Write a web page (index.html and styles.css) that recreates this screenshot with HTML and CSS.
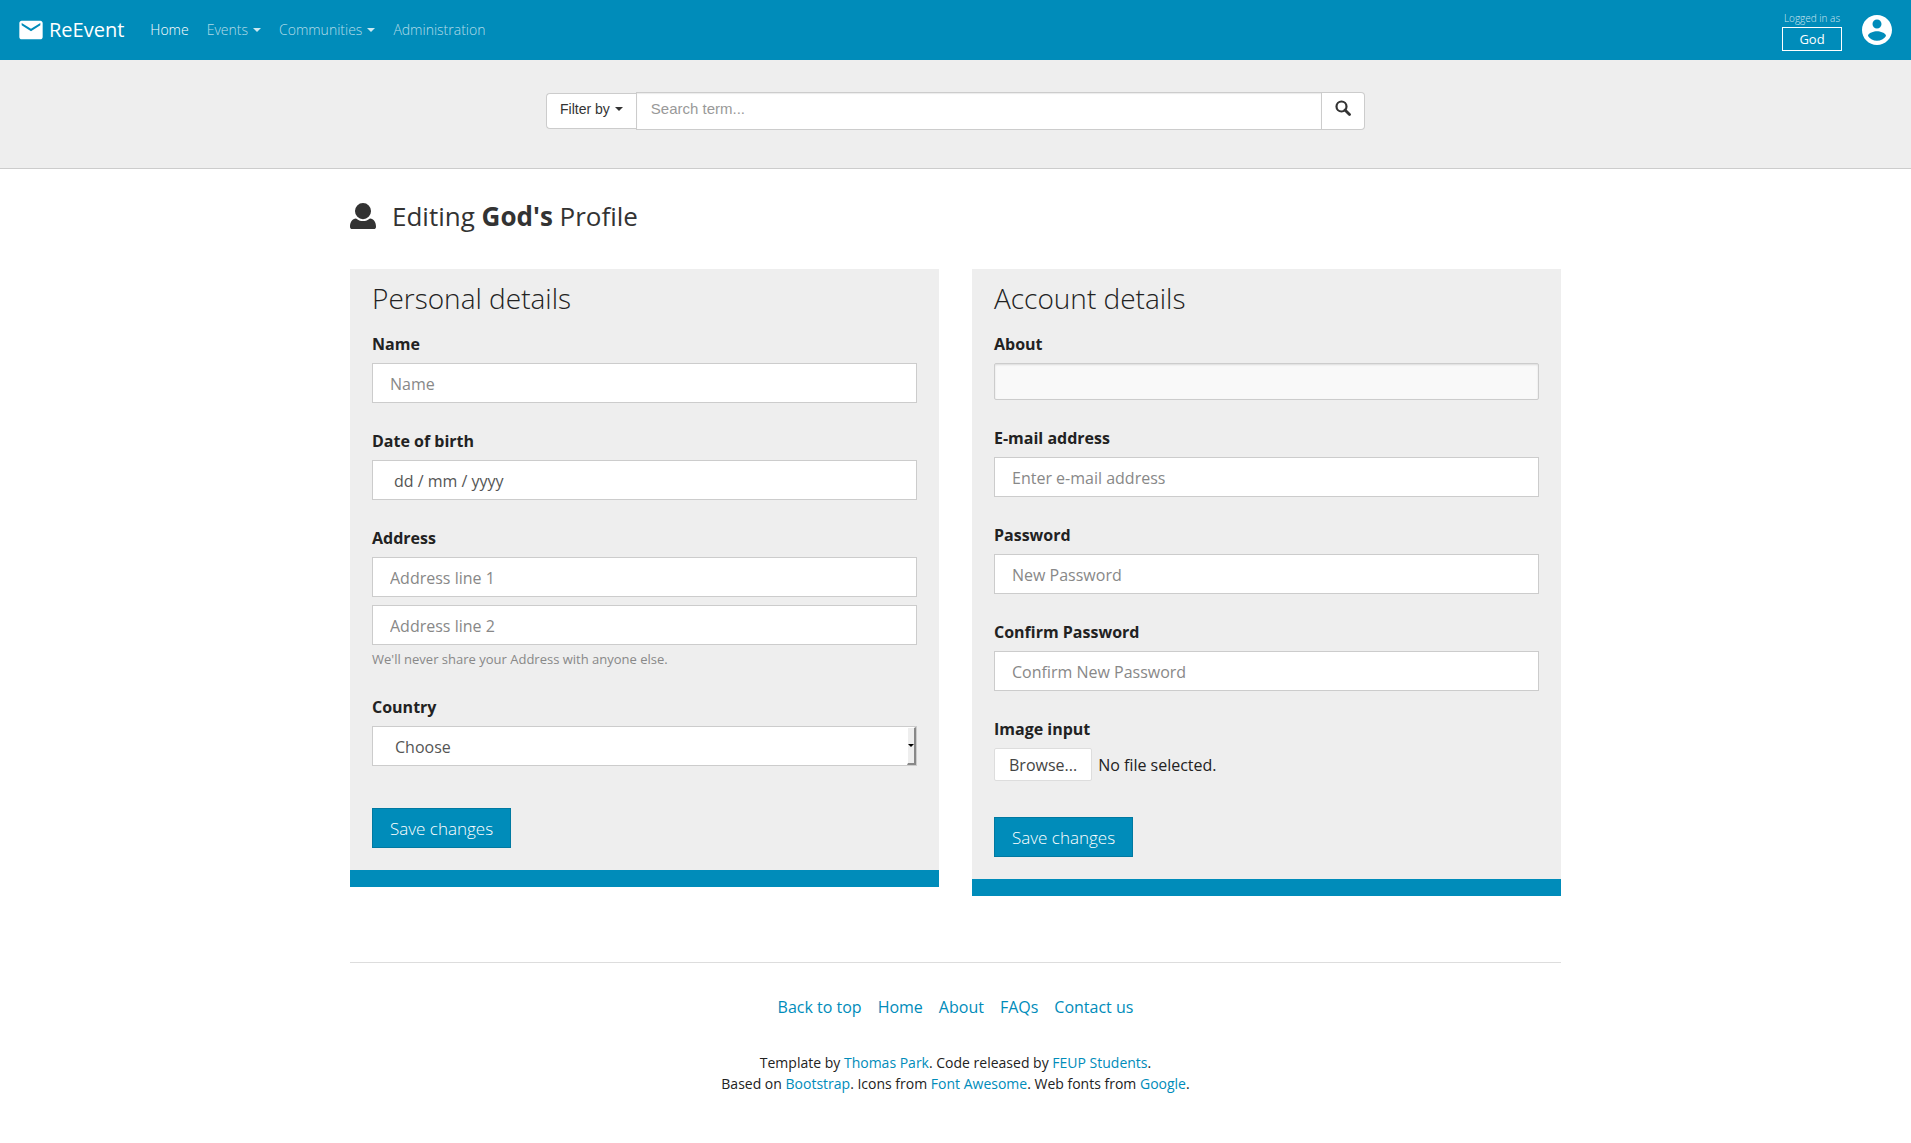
FILE: index.html
```html
<!DOCTYPE html>
<html lang="en">
<head>
<meta charset="utf-8">
<meta name="viewport" content="width=device-width, initial-scale=1">
<title>ReEvent - Edit profile</title>
<link rel="stylesheet" href="styles.css">
</head>
<body id="top">
<header class="navbar">
  <a class="brand" href="#">
    <svg class="brand-icon" viewBox="0 0 24 24" aria-hidden="true"><path fill="currentColor" d="M20 4H4c-1.100 0-1.990.900-1.990 2L2 18c0 1.100.900 2 2 2h16c1.100 0 2-.900 2-2V6c0-1.100-.900-2-2-2zm0 4l-8 5-8-5V6l8 5 8-5v2z"/></svg>
    <span>ReEvent</span>
  </a>
  <nav class="nav">
    <a class="nav-link active" href="#">Home</a>
    <a class="nav-link" href="#">Events<span class="caret"></span></a>
    <a class="nav-link" href="#">Communities<span class="caret"></span></a>
    <a class="nav-link" href="#">Administration</a>
  </nav>
  <div class="session">
    <div class="session-user">
      <span class="session-note">Logged in as</span>
      <button class="session-button" type="button">God</button>
    </div>
    <a class="avatar" href="#" aria-label="Profile">
      <svg viewBox="0 0 24 24" aria-hidden="true"><path fill="currentColor" d="M12 2C6.480 2 2 6.480 2 12s4.480 10 10 10 10-4.480 10-10S17.520 2 12 2zm0 3c1.660 0 3 1.340 3 3s-1.340 3-3 3-3-1.340-3-3 1.340-3 3-3zm0 14.200c-2.500 0-4.710-1.280-6-3.220.030-1.990 4-3.080 6-3.080 1.990 0 5.970 1.090 6 3.080-1.290 1.940-3.500 3.220-6 3.220z"/></svg>
    </a>
  </div>
</header>

<section class="search-band">
  <form class="search">
    <button class="filter-button" type="button">Filter by<span class="caret"></span></button>
    <input class="search-input" type="text" placeholder="Search term..." aria-label="Search term">
    <button class="search-button" type="button" aria-label="Search">
      <svg viewBox="0 0 16 16" aria-hidden="true"><circle cx="6.500" cy="6.500" r="5" fill="none" stroke="currentColor" stroke-width="2.200"/><path d="M10 10l4.500 4.500" stroke="currentColor" stroke-width="2.800" stroke-linecap="round"/></svg>
    </button>
  </form>
</section>

<main class="container">
  <h1 class="page-title">
    <svg class="title-icon" viewBox="0 0 26 26" aria-hidden="true"><path fill="currentColor" d="M13 0a8 8 0 0 1 8 8.200 8 8 0 0 1-16 0A8 8 0 0 1 13 0zM6 15.500c2 1.700 4.300 2.600 7 2.600s5-.900 7-2.600c3.800.400 6 3.700 6 8.200 0 1.500-.800 2.300-2.300 2.300H2.300C.800 26 0 25.200 0 23.700c0-4.500 2.200-7.800 6-8.200z"/></svg>
    <span>Editing <strong>God's</strong> Profile</span>
  </h1>

  <div class="cards">
    <form class="card">
      <h2 class="card-title">Personal details</h2>
      <div class="field">
        <label for="name">Name</label>
        <input class="control" id="name" type="text" placeholder="Name">
      </div>
      <div class="field">
        <label for="birth">Date of birth</label>
        <input class="control control-date" id="birth" type="text" placeholder="dd / mm / yyyy">
      </div>
      <div class="field field-address">
        <label for="address1">Address</label>
        <input class="control" id="address1" type="text" placeholder="Address line 1">
        <input class="control" type="text" placeholder="Address line 2" aria-label="Address line 2">
        <small class="help">We'll never share your Address with anyone else.</small>
      </div>
      <div class="field field-last">
        <label for="country">Country</label>
        <div class="select-wrap">
          <select class="control control-select" id="country"><option>Choose</option></select>
          <span class="select-arrow"></span>
        </div>
      </div>
      <button class="save" type="button">Save changes</button>
    </form>

    <form class="card">
      <h2 class="card-title">Account details</h2>
      <div class="field">
        <label for="about">About</label>
        <input class="control control-about" id="about" type="text">
      </div>
      <div class="field">
        <label for="email">E-mail address</label>
        <input class="control" id="email" type="email" placeholder="Enter e-mail address">
      </div>
      <div class="field">
        <label for="password">Password</label>
        <input class="control" id="password" type="password" placeholder="New Password">
      </div>
      <div class="field">
        <label for="confirm">Confirm Password</label>
        <input class="control" id="confirm" type="password" placeholder="Confirm New Password">
      </div>
      <div class="field field-file">
        <label for="image">Image input</label>
        <div class="file-row">
          <input class="file-input" id="image" type="file">
          <label class="browse" for="image">Browse...</label>
          <span>No file selected.</span>
        </div>
      </div>
      <button class="save" type="button">Save changes</button>
    </form>
  </div>

  <footer class="footer">
    <nav class="footer-links">
      <a href="#top">Back to top</a>
      <a href="#">Home</a>
      <a href="#">About</a>
      <a href="#">FAQs</a>
      <a href="#">Contact us</a>
    </nav>
    <p class="credits">Template by <a href="#">Thomas Park</a>. Code released by <a href="#">FEUP Students</a>.<br>
    Based on <a href="#">Bootstrap</a>. Icons from <a href="#">Font Awesome</a>. Web fonts from <a href="#">Google</a>.</p>
  </footer>
</main>
</body>
</html>
```
FILE: styles.css
```css
* { box-sizing: border-box; }

body {
  margin: 0;
  background: #fff;
  color: #222;
  font: 16px/24px "Open Sans", sans-serif;
}

a { color: #008cba; text-decoration: none; }
button, input, select { font-family: inherit; margin: 0; }

.navbar {
  display: flex;
  align-items: center;
  height: 60px;
  padding: 0 16px 0 17px;
  background: #008cba;
  color: #fff;
}

.brand {
  display: flex;
  align-items: center;
  gap: 4px;
  margin-right: 26px;
  color: #fff;
  font-size: 20px;
}
.brand-icon { width: 28px; height: 28px; }

.nav { display: flex; gap: 18px; }
.nav-link {
  display: flex;
  align-items: center;
  color: rgba(255, 255, 255, .7);
  font-size: 14px;
  font-weight: 300;
}
.nav-link.active { color: #fff; }

.caret {
  margin-left: 5px;
  border: 4px solid transparent;
  border-top-color: currentColor;
  border-bottom: 0;
}
.nav-link .caret { color: rgba(255, 255, 255, .8); }

.session {
  display: flex;
  align-items: center;
  gap: 17px;
  margin-left: auto;
}
.session-user {
  display: flex;
  flex-direction: column;
  align-items: center;
}
.session-note {
  color: rgba(255, 255, 255, .8);
  font-size: 10px;
  font-weight: 300;
  line-height: 18px;
}
.session-button {
  width: 60px;
  height: 24px;
  padding: 0;
  border: 1px solid #fff;
  background: none;
  color: #fff;
  font-size: 13px;
}
.avatar { color: #fff; }
.avatar svg { display: block; width: 36px; height: 36px; }

.search-band {
  padding: 32px 16px 38px;
  border-bottom: 1px solid #ccc;
  background: #eee;
}
.search {
  display: flex;
  align-items: center;
  max-width: 819px;
  margin: 0 auto;
  font-family: "Liberation Sans", Arial, sans-serif;
}
.filter-button {
  display: flex;
  align-items: center;
  height: 36px;
  padding: 0 13px 4px;
  border: 1px solid #ccc;
  border-right: 0;
  border-radius: 4px 0 0 4px;
  background: #fff;
  color: #333;
  font-size: 14px;
}
.search-input {
  flex: 1;
  min-width: 0;
  height: 38px;
  padding: 0 14px 6px;
  border: 1px solid #ccc;
  background: #fff;
  box-shadow: inset 0 1px 1px rgba(0, 0, 0, .08);
  font-size: 15px;
}
.search-input::placeholder { color: #999; }
.search-button {
  width: 43px;
  height: 38px;
  padding: 0 0 6px;
  border: 1px solid #ccc;
  border-left: 0;
  border-radius: 0 4px 4px 0;
  background: #fff;
  color: #333;
}
.search-button svg { display: block; width: 16px; height: 16px; margin: 0 auto; }

.container { max-width: 1211px; margin: 0 auto; }

.page-title {
  display: flex;
  align-items: center;
  gap: 16px;
  margin: 30px 0 36px;
  color: #333;
  font-size: 26px;
  font-weight: 400;
  line-height: 34px;
}
.title-icon { width: 26px; height: 26px; }

.cards {
  display: grid;
  grid-template-columns: 1fr 1fr;
  align-items: start;
  gap: 33px;
}
.card {
  padding: 9px 22px 22px;
  border-bottom: 17px solid #008cba;
  background: #eee;
}
.card-title {
  margin: 0 0 14px;
  font-size: 28px;
  font-weight: 300;
  line-height: 40px;
}

.field { display: flex; flex-direction: column; margin-bottom: 26px; }
.field > label { margin-bottom: 7px; font-weight: 700; }
.field-address { margin-bottom: 28px; }
.field-last { margin-bottom: 42px; }
.field-file { margin-bottom: 36px; }

.control {
  width: 100%;
  height: 40px;
  padding: 2px 17px 0;
  border: 1px solid #ccc;
  border-radius: 0;
  background: #fff;
  color: #555;
  font-size: 16px;
}
.control + .control { margin-top: 8px; }
.control::placeholder { color: #888; }
.control-date { padding-left: 21px; }
.control-date::placeholder { color: #555; }
.control-about {
  height: 37px;
  border-radius: 2px;
  background: #f9f9f9;
  box-shadow: inset 0 1px 2px rgba(0, 0, 0, .12);
}

.help { margin-top: 7px; color: #888; font-size: 13px; line-height: 15px; }

.select-wrap { position: relative; }
.control-select { display: block; padding-left: 22px; appearance: none; }
.select-arrow {
  position: absolute;
  top: 1px;
  right: 1px;
  bottom: 1px;
  width: 9px;
  border: 2px solid #888;
  border-top: 1px solid #fff;
  border-left: 1px solid #fff;
  background: #eee;
  pointer-events: none;
}
.select-arrow::after {
  position: absolute;
  top: 16px;
  left: 0;
  border: 3px solid transparent;
  border-top-color: #000;
  border-bottom: 0;
  content: "";
}

.file-row { display: flex; align-items: center; gap: 6px; position: relative; }
.file-input { position: absolute; width: 1px; height: 1px; opacity: 0; }
.browse {
  height: 33px;
  padding: 0 14px;
  border: 1px solid #ddd;
  border-radius: 2px;
  background: #fff;
  color: #444;
  line-height: 33px;
}

.save {
  display: block;
  height: 40px;
  padding: 0 17px;
  border: 1px solid #0079a1;
  background: #008cba;
  color: #fff;
  font-size: 17px;
  font-weight: 300;
}

.footer {
  margin-top: 66px;
  padding: 32px 0;
  border-top: 1px solid #ddd;
  text-align: center;
}
.footer-links { display: flex; justify-content: center; gap: 16px; }
.credits { margin: 33px 0 0; font-size: 14px; line-height: 21px; }
```
